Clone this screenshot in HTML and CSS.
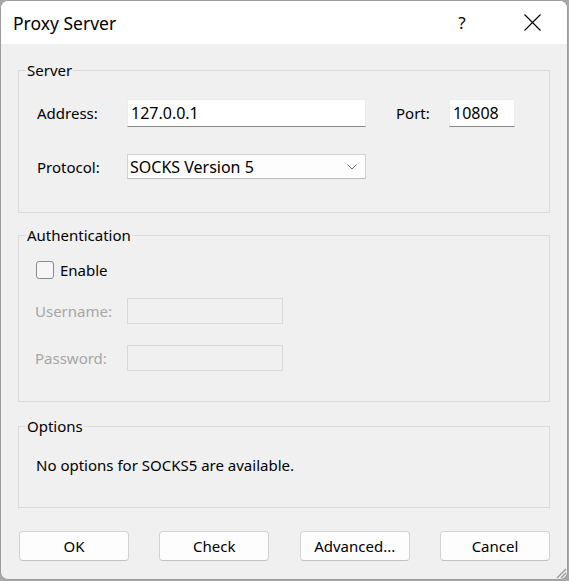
FILE: index.html
```html
<!DOCTYPE html>
<html lang="en">
<head>
    <meta charset="UTF-8">
    <title>Proxy Server</title>
    <link rel="stylesheet" href="styles.css">
</head>
<body>
    <div class="dialog">
        <div class="title-bar">
            <span class="title">Proxy Server</span>
            <span class="title-help">?</span>
            <span class="title-close">
                <svg width="17" height="17" viewBox="0 0 17 17">
                    <path d="M0.5 0.5 L16.5 16.5 M16.5 0.5 L0.5 16.5" stroke="#000" stroke-width="1.1" fill="none"/>
                </svg>
            </span>
        </div>

        <div class="dialog-body">
            <fieldset class="group group-server">
                <legend>Server</legend>
                <div class="server-grid">
                    <label class="field-label">Address:</label>
                    <div class="text-input address-input">127.0.0.1</div>
                    <label class="field-label port-label">Port:</label>
                    <div class="text-input port-input">10808</div>

                    <label class="field-label">Protocol:</label>
                    <div class="select-box">
                        <span>SOCKS Version 5</span>
                        <svg class="chevron" width="10" height="6" viewBox="0 0 10 6">
                            <path d="M0.5 0.5 L5 5 L9.5 0.5" stroke="#6a6a6a" stroke-width="1" fill="none"/>
                        </svg>
                    </div>
                </div>
            </fieldset>

            <fieldset class="group group-auth">
                <legend>Authentication</legend>
                <div class="check-row">
                    <span class="checkbox"></span>
                    <span>Enable</span>
                </div>
                <div class="auth-grid">
                    <label class="field-label disabled">Username:</label>
                    <div class="text-input disabled-input"></div>
                    <label class="field-label disabled">Password:</label>
                    <div class="text-input disabled-input"></div>
                </div>
            </fieldset>

            <fieldset class="group group-options">
                <legend>Options</legend>
                <div class="options-text">No options for SOCKS5 are available.</div>
            </fieldset>

            <div class="button-row">
                <button class="btn">OK</button>
                <button class="btn">Check</button>
                <button class="btn">Advanced...</button>
                <button class="btn">Cancel</button>
            </div>
        </div>

        <!-- size grip -->
        <svg class="size-grip" width="13" height="13" viewBox="0 0 13 13">
            <path d="M12 3 L3 12 M12 7 L7 12 M12 11 L11 12" stroke="#9a9a9a" stroke-width="1.4" fill="none"/>
        </svg>
    </div>
</body>
</html>
```

FILE: styles.css
```css
* {
    margin: 0;
    padding: 0;
    box-sizing: border-box;
}

body {
    background: #a8a8a8;
    font-family: "Noto Sans", "Open Sans", sans-serif;
    font-size: 15px;
    color: #000;
}

.dialog {
    position: relative;
    width: 568px;
    height: 580px;
    background: #f0f0f0;
    border: 1px solid #9c9c9c;
    border-radius: 8px;
    overflow: hidden;
    display: flex;
    flex-direction: column;
}

/* title bar */
.title-bar {
    height: 43px;
    background: #fff;
    display: flex;
    align-items: center;
    padding-left: 12px;
    flex-shrink: 0;
}

.title {
    font-size: 17.5px;
    flex: 1;
}

.title-help {
    font-size: 17px;
    width: 18px;
    margin-right: 53px;
    text-align: center;
}

.title-close {
    width: 17px;
    height: 17px;
    margin-right: 26px;
    display: flex;
}

/* body */
.dialog-body {
    flex: 1;
    padding: 16px 17px 0 17px;
    display: flex;
    flex-direction: column;
}

.group {
    border: 1px solid #dcdcdc;
    padding: 0;
}

.group legend {
    margin-left: 7px;
    padding: 0 1px;
    line-height: 20px;
}

.field-label {
    white-space: nowrap;
}

.disabled {
    color: #a6a6a6;
}

.text-input {
    background: #fff;
    border: 1px solid #ececec;
    border-bottom-color: #878787;
    padding: 0 3px;
    font-size: 16px;
    display: flex;
    align-items: center;
}

/* Server */
.group-server {
    height: 153px;
}

.server-grid {
    display: grid;
    grid-template-columns: 90px 239px 30px 53px 66px;
    grid-template-rows: 28px 25px;
    row-gap: 27px;
    align-items: center;
    padding: 19px 0 0 18px;
}

.address-input {
    height: 28px;
}

.port-label {
    grid-column: 4;
}

.port-input {
    height: 28px;
    padding-left: 3px;
}

.select-box {
    grid-column: 2;
    height: 25px;
    font-size: 16px;
    background: #fdfdfd;
    border: 1px solid #d2d2d2;
    border-bottom-color: #bdbdbd;
    display: flex;
    align-items: center;
    justify-content: space-between;
    padding: 0 8px 0 2px;
}

.chevron {
    margin-top: 1px;
}

/* Authentication */
.group-auth {
    margin-top: 12px;
    height: 177px;
}

.check-row {
    display: flex;
    align-items: center;
    gap: 6px;
    padding: 15px 0 0 17px;
}

.checkbox {
    width: 18px;
    height: 18px;
    border: 1px solid #8a8a8a;
    border-radius: 3px;
    background: #f6f6f6;
}

.auth-grid {
    display: grid;
    grid-template-columns: 92px 156px;
    grid-template-rows: 26px 26px;
    row-gap: 21px;
    align-items: center;
    padding: 18px 0 0 16px;
}

.disabled-input {
    height: 26px;
    background: #f0f0f0;
    border: 1px solid #d9d9d9;
}

/* Options */
.group-options {
    margin-top: 14px;
    height: 92px;
}

.options-text {
    padding: 19px 0 0 17px;
}

/* buttons */
.button-row {
    display: flex;
    justify-content: space-between;
    margin-top: 23px;
    padding: 0 0 0 1px;
}

.btn {
    width: 110px;
    height: 30px;
    font-family: inherit;
    font-size: 15px;
    color: #000;
    background: #fdfdfd;
    border: 1px solid #d3d3d3;
    border-bottom-color: #c2c2c2;
    border-radius: 4px;
}

.size-grip {
    position: absolute;
    right: 0;
    bottom: 0;
}
```
